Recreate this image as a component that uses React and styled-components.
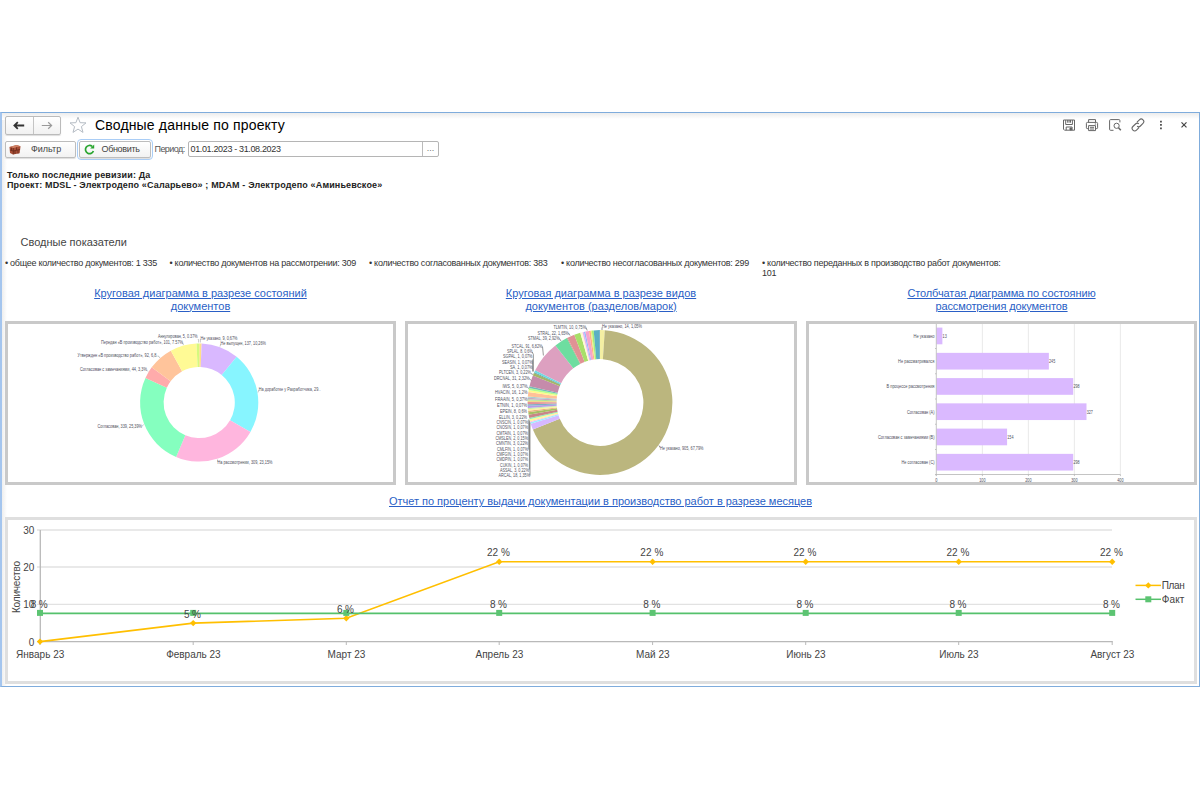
import React from "react";
import styled, { createGlobalStyle } from "styled-components";

const Global = createGlobalStyle`
  * { box-sizing: border-box; }
  body { margin: 0; background: #fff; font-family: "Liberation Sans", Arial, sans-serif; }
`;

const Page = styled.div`
  height: 800px;
  padding: 112px 0 113px;
  overflow: hidden;
`;
const Window = styled.main`
  height: 575px;
  border: 1px solid #7facdc;
  border-left: 2px solid #a4c5ee;
  background: linear-gradient(#ececec, #fff 6px) top / 100% 7px no-repeat,
    linear-gradient(90deg, #eee, #fff) left / 5px 100% no-repeat, #fff;
  color: #333;
  display: flex;
  flex-direction: column;
`;
const TitleBar = styled.header`
  height: 24px;
  display: flex;
  align-items: center;
  padding: 0 8px 0 3px;
`;
const NavGroup = styled.div`
  display: flex;
  width: 56px;
  height: 19px;
  border: 1px solid #bbb;
  border-radius: 2px;
  background: linear-gradient(#fff, #f1f1f1);
  box-shadow: 0 1px 1px #ddd;
`;
const NavButton = styled.span`
  flex: 1;
  display: flex;
  align-items: center;
  justify-content: center;
  color: ${(p) => (p.$muted ? "#9a9a9a" : "#333")};
  & + & { border-left: 1px solid #c4c4c4; }
`;
const StarIcon = styled.svg`
  width: 18px;
  height: 18px;
  margin: 0 8px 0 8px;
`;
const Title = styled.h1`
  flex: 1;
  margin: 0;
  font-size: 14px;
  font-weight: 400;
  letter-spacing: 0.17px;
  color: #000;
`;
const Tools = styled.div`
  display: flex;
  gap: 9px;
  svg { width: 14px; height: 14px; display: block; }
`;
const Toolbar = styled.div`
  height: 24px;
  display: flex;
  align-items: center;
  padding-left: 3px;
  font-size: 9px;
`;
const Button = styled.button`
  width: 71px;
  height: 17px;
  padding: 0 0 0 3px;
  display: flex;
  align-items: center;
  gap: 10px;
  border: 1px solid #bdbdbd;
  border-radius: 2px;
  background: linear-gradient(#fff, #f2f2f2);
  font: 9px "Liberation Sans", Arial, sans-serif;
  color: #444;
  box-shadow: 0 1px 1px #ddd;
`;
const RefreshButton = styled(Button)`
  width: 72px;
  margin-left: 3px;
  padding-left: 4px;
  gap: 6.5px;
  letter-spacing: -0.34px;
  outline: 1.5px solid #a9cdf6;
  outline-offset: 1px;
`;
const FieldLabel = styled.span`
  width: 33.5px;
  margin-left: 3.5px;
  letter-spacing: -0.55px;
  color: #555;
`;
const DateField = styled.div`
  width: 251px;
  height: 16px;
  display: flex;
  align-items: center;
  border: 1px solid #b5b5b5;
  border-radius: 2px;
  background: #fff;
`;
const DateValue = styled.span`
  flex: 1;
  padding-left: 1.5px;
  letter-spacing: -0.35px;
  color: #333;
`;
const Picker = styled.span`
  width: 16px;
  height: 14px;
  border-left: 1px solid #bbb;
  text-align: center;
  line-height: 12px;
  color: #777;
`;
const Params = styled.section`
  padding: 9px 0 0 5px;
  font-size: 9px;
  line-height: 10px;
  font-weight: 700;
  color: #222;
`;
const Param = styled.div`
  letter-spacing: ${(p) => p.$ls}px;
`;
const SectionTitle = styled.h2`
  margin: 45px 0 0 18.5px;
  font-size: 11px;
  line-height: 14px;
  font-weight: 400;
  color: #444;
`;
const Indicators = styled.ul`
  list-style: none;
  margin: 9px 0 0;
  padding: 0 0 0 3px;
  height: 20px;
  display: grid;
  grid-template-columns: 164.5px 199.5px 192px 201px 240px;
  font-size: 9px;
  line-height: 10px;
  letter-spacing: -0.265px;
`;
const Indicator = styled.li`
  color: #333;
`;
const Headings = styled.div`
  margin: 9px 2px 9px 3px;
  display: grid;
  grid-template-columns: 391px 392px 391px;
  column-gap: 9px;
  justify-items: center;
`;
const ReportLink = styled.a`
  width: ${(p) => p.$w || "auto"};
  text-align: center;
  font-size: 11px;
  line-height: 12.5px;
  letter-spacing: ${(p) => p.$ls || 0}px;
  color: #2a5fc6;
  text-decoration: underline;
  text-underline-offset: 1px;
`;
const Cards = styled.div`
  margin: 0 2px 0 3px;
  height: 164px;
  display: grid;
  grid-template-columns: 391px 392px 391px;
  column-gap: 9px;
`;
const Card = styled.div`
  border: 3px solid ${(p) => (p.$light ? "#dfdfdf" : "#c9c9c9")};
  background: #fff;
  min-width: 0;
  overflow: hidden;
  svg { display: block; width: 100%; height: 100%; }
`;
const WideHeading = styled.div`
  height: 14px;
  margin: 10px 0 8px;
  display: flex;
  justify-content: center;
`;
const WideCard = styled(Card)`
  height: 167px;
  margin: 0 2px 0 3px;
`;
const Tiny = styled.text`
  font-size: 4.6px;
  fill: #505060;
`;
const AxisText = styled.text`
  font-size: 10px;
  fill: #444;
`;

const polar = (cx, cy, r, deg) => {
  const a = ((deg - 90) * Math.PI) / 180;
  return `${(cx + r * Math.cos(a)).toFixed(2)} ${(cy + r * Math.sin(a)).toFixed(2)}`;
};

function Ring({ cx, cy, outer, inner, parts }) {
  let from = 0;
  return parts.map(([to, fill], i) => {
    const start = from;
    from = to;
    const large = to - start > 180 ? 1 : 0;
    return (
      <path
        key={i}
        fill={fill}
        d={`M${polar(cx, cy, outer, start)}A${outer} ${outer} 0 ${large} 1 ${polar(cx, cy, outer, to)}L${polar(cx, cy, inner, to)}A${inner} ${inner} 0 ${large} 0 ${polar(cx, cy, inner, start)}Z`}
      />
    );
  });
}

function Labels({ items }) {
  return items.map(([text, x1, x2, y]) => (
    <Tiny key={text} x={x1} y={y} textLength={x2 - x1} lengthAdjust="spacingAndGlyphs">
      {text}
    </Tiny>
  ));
}

const stateParts = [
  [2.4, "#ffe08a"], [39.3, "#d9b8ff"], [119.9, "#87f5ff"], [203, "#ffb6de"],
  [294.6, "#85ffbf"], [306.5, "#ffabab"], [331.3, "#ffc49b"], [357.4, "#fffa95"], [360, "#d5f97e"],
];
const stateLabels = [
  ["Аннулирован, 5, 0.37%", 158, 197.5, 338.6],
  ["Не указано, 9, 0,67%", 200.5, 237.5, 340.6],
  ["Не выпущен, 137, 10,26%", 220.5, 266, 345.8],
  ["Передан «В производство работ», 101, 7.57%", 101, 183, 344],
  ["Утвержден «В производство работ», 92, 6,8..", 77.5, 158.5, 357.1],
  ["Согласован с замечаниями, 44, 3,3%", 80, 147, 371.6],
  ["На доработке у Разработчика, 29..", 258.7, 320.5, 391.8],
  ["Согласован, 339, 25,39%", 97.5, 142, 428.8],
  ["На рассмотрении, 309, 23,15%", 217.5, 272.5, 464.3],
];

const kindParts = [
  [3.8, "#f4efa3"], [248, "#bbb67e"], [253, "#d6b8ff"], [254.2, "#9deeff"], [255, "#ffc0dc"],
  [256.6, "#fff99a"], [257.6, "#8df0b5"], [260.3, "#c98588"], [262.3, "#a5bf63"], [263.4, "#e9b27f"],
  [264.6, "#fff1a0"], [265.6, "#c9ecaa"], [267.4, "#b39be8"], [268.6, "#7dafc4"], [270.4, "#e39298"],
  [271.6, "#f0d98e"], [272.6, "#a9e293"], [273.8, "#c9a9c4"], [274.8, "#a8d1cf"], [278.4, "#ffc198"],
  [280, "#fff98b"], [281.6, "#b1ff8c"], [283, "#72bdb5"], [292, "#c58bab"], [294, "#a4b565"],
  [294.7, "#589992"], [296.5, "#70dbe3"], [322, "#dda0c0"], [332.8, "#6edda0"], [333.4, "#bd957b"],
  [339.2, "#e09295"], [344.2, "#a8df69"], [346, "#fffad2"], [347.2, "#e5b1f2"], [348.3, "#94bcfc"],
  [351.2, "#f6a4cc"], [352.6, "#ffb188"], [353.5, "#e6f37f"], [355, "#a8ee79"], [359.7, "#5bb0c3"], [360, "#4b88b5"],
];
const kindLabels = [
  ["Не указано, 14, 1,05%", 602, 642, 328.5],
  ["Не указано, 905, 67,79%", 660, 703.5, 450.3],
  ["TLMTIN, 10, 0,75%", 553.5, 586, 329.4],
  ["STRAL, 22, 1,65%", 537.5, 568.7, 335],
  ["STMAL, 39, 2,92%", 528, 559.5, 340.4],
  ["STCAL, 91, 6,82%", 511.5, 542.3, 348.1],
  ["SPLAL, 8, 0,6%", 507, 532.5, 353.4],
  ["SGPAL, 1, 0,07%", 503, 532.5, 358.9],
  ["SEASIN, 1, 0,07%", 502, 532.5, 364.3],
  ["SA, 1, 0,07%", 510, 532.5, 369.6],
  ["PLTCEN, 3, 0,22%", 499, 531, 374.9],
  ["DRCNAL, 31, 2,32%", 494, 529.5, 380.7],
  ["IWS, 5, 0,37%", 502.5, 527.5, 388.8],
  ["HVACIN, 16, 1,2%", 495, 527.5, 394.2],
  ["FRAAIN, 5, 0,37%", 495, 527.5, 401.6],
  ["ETNIN, 1, 0,07%", 497, 527, 407.2],
  ["EPEIN, 8, 0,6%", 500, 527, 413.8],
  ["ELLIN, 3, 0,22%", 499, 527, 419.1],
  ["CNSCIN, 1, 0,07%", 496.5, 528, 424.5],
  ["CNOSIN, 1, 0,07%", 496.5, 528, 429.8],
  ["CMTAIN, 1, 0,07%", 496.5, 528, 435.1],
  ["CMSLEN, 2, 0,15%", 495.5, 528, 440.5],
  ["CMNTIN, 3, 0,22%", 496, 528, 445.8],
  ["CMLFIN, 1, 0,07%", 497, 528, 451.2],
  ["CMFGIN, 1, 0,07%", 496.5, 528, 456.5],
  ["CMDPIN, 1, 0,07%", 496.5, 528, 461.8],
  ["CUKIN, 1, 0,07%", 500, 528, 467.2],
  ["ASSAL, 3, 0,22%", 500, 529, 472.5],
  ["ARCAL, 18, 1,35%", 498.5, 530, 477.9],
];

const bars = [
  ["Не указано", 13, 913.5], ["Не рассматривался", 245, 898], ["В процессе рассмотрения", 298, 886.5],
  ["Согласован (A)", 327, 907], ["Согласован с замечаниями (B)", 154, 878], ["Не согласован (C)", 298, 901.5],
];

const months = ["Январь 23", "Февраль 23", "Март 23", "Апрель 23", "Май 23", "Июнь 23", "Июль 23", "Август 23"];
const monthX = [40, 193.2, 346.3, 499.2, 652.6, 805.7, 958.7, 1112.2];
const planY = [641.6, 623.1, 618.3, 561.7, 561.7, 561.7, 561.7, 561.7];
const planText = ["", "5 %", "6 %", "22 %", "22 %", "22 %", "22 %", "22 %"];
const factY = 613;

function StateChart() {
  return (
    <svg viewBox="8 324.5 385 158">
      <Ring cx={199.2} cy={403} outer={59.1} inner={35.6} parts={stateParts} />
      <path d="M198.6 343v-3h-.8M200.4 343v-3h.5M220 347l.8-2.5M258 393l.8-2.5M183.5 345.5l-1-2.5M160 358.5l-2-2.5M148 372l-1.5-1.5M143.5 425l-1.5 2M217.5 460v2.5" stroke="#a5a5a5" strokeWidth=".6" fill="none" />
      <Labels items={stateLabels} />
    </svg>
  );
}

function KindChart() {
  return (
    <svg viewBox="408 324.5 386 158">
      <Ring cx={600} cy={403} outer={72.4} inner={43.4} parts={kindParts} />
      <path d="M530 476V423M529.4 470V421M528.8 450V420M533.4 372V355l-1.2-2.5M532.6 372v-12M542.5 347l.9 9M559.5 339l1.5 2.5M568.5 333.5l1.5 2.5M586 328l1.2 3M602 328v2.5M659 446l1 2M531 374l1.8 1M529.5 379l1.5 2M527.5 388l1.5 1" stroke="#555" strokeWidth=".6" fill="none" />
      <Labels items={kindLabels} />
    </svg>
  );
}

function BarChart() {
  return (
    <svg viewBox="809 324.5 385 158">
      {[100, 200, 300, 400].map((v) => (
        <path key={v} d={`M${936.4 + v * 0.46} 324V475`} stroke="#e4e4e4" strokeWidth=".8" />
      ))}
      {bars.map(([name, value, x], i) => {
        const y = 328.1 + i * 25.25;
        const end = 936.4 + value * 0.459;
        return (
          <g key={name}>
            <rect x="936.4" y={y} width={value * 0.459} height="16.7" fill="#dab9ff" />
            <Tiny x={x} y={y + 10.3} textLength={934.5 - x} lengthAdjust="spacingAndGlyphs">{name}</Tiny>
            <Tiny x={end + 0.2} y={y + 10.3} textLength={value < 100 ? 4.2 : 6.2} lengthAdjust="spacingAndGlyphs">{value}</Tiny>
            <path d={`M935 ${y + 20.9}h1.4`} stroke="#aaa" strokeWidth=".7" />
          </g>
        );
      })}
      <path d="M936.3 324V475M935 475H1120.4" stroke="#bdbdbd" strokeWidth=".9" />
      {[0, 100, 200, 300, 400].map((v) => (
        <g key={v}>
          <path d={`M${936.4 + v * 0.46} 475v1.6`} stroke="#aaa" strokeWidth=".7" />
          <Tiny x={936.4 + v * 0.46} y="482.2" textAnchor="middle" textLength={v ? 6.4 : 2.2} lengthAdjust="spacingAndGlyphs">{v}</Tiny>
        </g>
      ))}
    </svg>
  );
}

function Diamond({ x, y }) {
  return <path d={`M${x - 3.2} ${y}l3.2-3.2 3.2 3.2-3.2 3.2z`} fill="#ffbf00" />;
}

function LineChart() {
  return (
    <svg viewBox="8 520 1186 161">
      {[530, 567, 604.3].map((y) => (
        <path key={y} d={`M37 ${y}H1112`} stroke="#e2e2e2" strokeWidth="1.3" />
      ))}
      <path d="M40.3 530V642M37 641.7H1112.5" stroke="#b9b9b9" strokeWidth="1.3" />
      {monthX.map((x) => <path key={x} d={`M${x} 641v4`} stroke="#b9b9b9" />)}
      {[["30", 533.7], ["20", 571.2], ["10", 608], ["0", 645.6]].map(([t, y]) => (
        <AxisText key={t} x="34.3" y={y} textAnchor="end">{t}</AxisText>
      ))}
      <AxisText transform="translate(20.3 613) rotate(-90)" textLength="52">Количество</AxisText>
      <polyline points={monthX.map((x, i) => `${x},${planY[i]}`).join(" ")} fill="none" stroke="#ffbf00" strokeWidth="1.6" />
      {monthX.map((x, i) => <Diamond key={x} x={x} y={planY[i]} />)}
      <path d={`M40 ${factY + 0.3}H1112`} stroke="#55c16c" strokeWidth="1.8" />
      {monthX.map((x) => <rect key={x} x={x - 3} y={factY - 3.1} width="6" height="6" fill="#5cc472" />)}
      {monthX.map((x, i) => (
        <g key={x}>
          {i !== 1 && i !== 2 && <AxisText x={x - 0.8} y={607.7} textAnchor="middle" textLength="17">8 %</AxisText>}
          {planText[i] && (
            <AxisText x={x - 0.8} y={i < 3 ? planY[i] - 5.6 : 556} textAnchor="middle" textLength={i < 3 ? 17 : 23}>{planText[i]}</AxisText>
          )}
          <AxisText x={x + 0.2} y="657.8" textAnchor="middle">{months[i]}</AxisText>
        </g>
      ))}
      <path d="M1135.5 585.4h25.5" stroke="#ffbf00" strokeWidth="1.5" />
      <Diamond x={1148.3} y={585.4} />
      <path d="M1135.5 599.3h25.5" stroke="#55c16c" strokeWidth="1.5" />
      <rect x="1145.3" y="596.3" width="6" height="6" fill="#5cc472" />
      <AxisText x="1161.8" y="589.2" textLength="23">План</AxisText>
      <AxisText x="1161.8" y="603" textLength="22.5">Факт</AxisText>
    </svg>
  );
}

function Arrow({ back }) {
  return (
    <svg width="12" height="9" viewBox="0 0 12 9" fill="none" stroke="currentColor" strokeWidth={back ? 1.8 : 1.2}>
      <path d={back ? "M11.2 4.5H1.5M4.8 1.2L1.4 4.5l3.4 3.3" : "M.8 4.5h9.8M7.2 1.2l3.4 3.3-3.4 3.3"} />
    </svg>
  );
}

function HeaderTools() {
  const s = { fill: "none", stroke: "#666", strokeWidth: 1 };
  return (
    <Tools>
      <svg viewBox="0 0 14 14" {...s}>
        <path d="M1.5 2h11v10.2h-10l-1-1zM3.7 2v4.5h6.7V2M4.2 12.2V9h5.9v3.2M5.7 2v2.7M7.1 2v2.7M8.5 2v2.7" />
        <path d="M8 10h1.5v2H8z" fill="#555" />
      </svg>
      <svg viewBox="0 0 14 14" {...s}>
        <path d="M3.6 4.4V1.6h6.9v2.8M3.6 10.6H2.2Q1.4 10.6 1.4 9.8V5.4q0-1 1-1h9.2q1 0 1 1v4.4q0 .8-.8.8h-1.3M3.6 7.6h6.9v5H3.6zM5 9.3h4.1M5 11h4.1M9.8 6h1.3" />
      </svg>
      <svg viewBox="0 0 14 14" {...s}>
        <path d="M5.5 12.3H2.6q-1 0-1-1V2.6q0-1 1-1h8.3q1 0 1 1v1.8" />
        <circle cx="8.6" cy="7.8" r="2.6" />
        <path d="M10.5 9.8l2.3 2.5" strokeWidth="1.5" />
      </svg>
      <svg viewBox="0 0 14 14" {...s} strokeWidth="1.1">
        <path d="M6 4.2l2.4-2.4a2.5 2.5 0 0 1 3.6 3.6L9.4 8a2.5 2.5 0 0 1-3.3.2M8 9.6l-2.5 2.5a2.5 2.5 0 0 1-3.6-3.6L4.5 6a2.5 2.5 0 0 1 3.3-.2" />
      </svg>
      <svg viewBox="0 0 14 14" fill="#444">
        <path d="M6.1 2.7h1.7v1.7H6.1zM6.1 6.1h1.7v1.7H6.1zM6.1 9.5h1.7v1.7H6.1z" />
      </svg>
      <svg viewBox="0 0 14 14" fill="none" stroke="#444" strokeWidth="1.2">
        <path d="M4.5 4.3l5 5M9.5 4.3l-5 5" />
      </svg>
    </Tools>
  );
}

export default function App() {
  return (
    <Page>
      <Global />
      <Window>
        <TitleBar>
          <NavGroup>
            <NavButton><Arrow back /></NavButton>
            <NavButton $muted><Arrow /></NavButton>
          </NavGroup>
          <StarIcon viewBox="0 0 18 18" fill="#fff" stroke="#b5bcc4" strokeWidth="1">
            <path d="M9 1.2l2.1 5.5 5.9.2-4.6 3.7 1.6 5.8L9 13.1l-5 3.3 1.6-5.8L1 6.9l5.9-.2z" />
          </StarIcon>
          <Title>Сводные данные по проекту</Title>
          <HeaderTools />
        </TitleBar>
        <Toolbar>
          <Button>
            <svg width="12" height="11" viewBox="0 0 12 11">
              <path d="M.5 3l7-2 4 1.2-.8 7L4 10.5 1 9z" fill="#a64d35" />
              <path d="M.5 3l7-2 4 1.2L4.5 4z" fill="#ce8065" />
              <path d="M4.3 4v6.4M1 6l3.3 1 6.7-1.6M2.5 3.7v2.7M7.5 3.3v2.8M9 5.9v3.7M6 6.7v3.2" stroke="#632719" strokeWidth=".7" fill="none" />
            </svg>
            Фильтр
          </Button>
          <RefreshButton>
            <svg width="11" height="11" viewBox="0 0 11 11">
              <path d="M9.4 7A4.1 4.1 0 1 1 8.2 2.4" fill="none" stroke="#29a52f" strokeWidth="1.7" />
              <path d="M6.2 4.4h4V.4z" fill="#29a52f" />
            </svg>
            Обновить
          </RefreshButton>
          <FieldLabel>Период:</FieldLabel>
          <DateField>
            <DateValue>01.01.2023 - 31.08.2023</DateValue>
            <Picker>...</Picker>
          </DateField>
        </Toolbar>
        <Params>
          <Param $ls={0.18}>Только последние ревизии: Да</Param>
          <Param $ls={0.144}>Проект: MDSL - Электродепо «Саларьево» ; MDAM - Электродепо «Аминьевское»</Param>
        </Params>
        <SectionTitle>Сводные показатели</SectionTitle>
        <Indicators>
          <Indicator>• общее количество документов: 1 335</Indicator>
          <Indicator>• количество документов на рассмотрении: 309</Indicator>
          <Indicator>• количество согласованных документов: 383</Indicator>
          <Indicator>• количество несогласованных документов: 299</Indicator>
          <Indicator>• количество переданных в производство работ документов: 101</Indicator>
        </Indicators>
        <Headings>
          <ReportLink $w="230px">Круговая диаграмма в разрезе состояний документов</ReportLink>
          <ReportLink $w="210px">Круговая диаграмма в разрезе видов документов (разделов/марок)</ReportLink>
          <ReportLink $w="210px" $ls={-0.11}>Столбчатая диаграмма по состоянию рассмотрения документов</ReportLink>
        </Headings>
        <Cards>
          <Card><StateChart /></Card>
          <Card><KindChart /></Card>
          <Card><BarChart /></Card>
        </Cards>
        <WideHeading>
          <ReportLink $ls={-0.02}>Отчет по проценту выдачи документации в производство работ в разрезе месяцев</ReportLink>
        </WideHeading>
        <WideCard $light><LineChart /></WideCard>
      </Window>
    </Page>
  );
}
